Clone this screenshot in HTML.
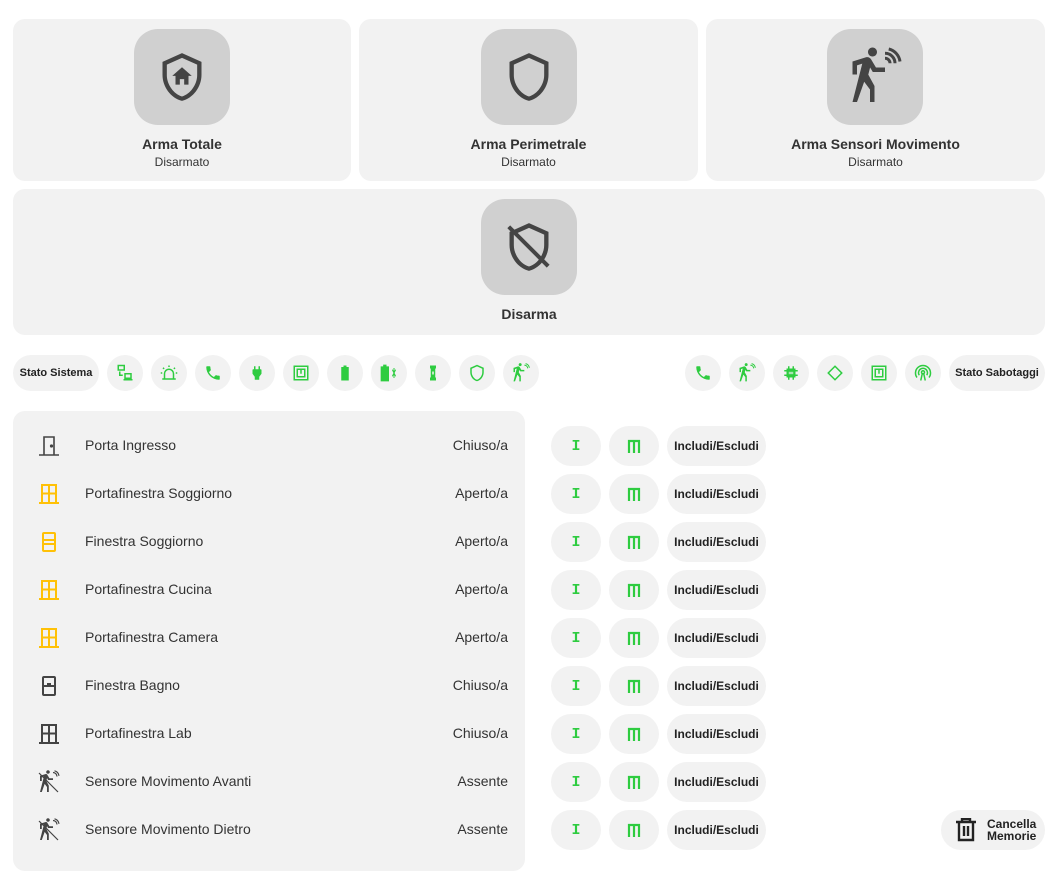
<!DOCTYPE html>
<html><head><meta charset="utf-8"><style>
*{box-sizing:border-box;margin:0;padding:0}
body{width:1062px;height:858px;overflow:hidden;background:#fff;font-family:"Liberation Sans",sans-serif;color:#212121;position:relative}
.card{position:absolute;background:#f2f2f2;border-radius:12px}
.ib{position:absolute;width:96px;height:96px;background:#d0d0d0;border-radius:24px;display:flex;align-items:center;justify-content:center}
.t{position:absolute;width:100%;text-align:center;font-size:14px;font-weight:bold;color:#333}
.s{position:absolute;width:100%;text-align:center;font-size:12px;color:#333}
.chip{position:absolute;top:355px;height:36px;background:#f2f2f2;border-radius:18px;display:flex;align-items:center;justify-content:center}
.c{width:36px}
.lbl{font-size:11px;font-weight:bold;color:#222}
.row{position:absolute;left:13px;width:512px;height:48px}
.row svg{position:absolute;left:24px;top:12px}
.row .n{position:absolute;left:72px;top:15px;font-size:14px;color:#333}
.row .v{position:absolute;right:17px;top:15px;font-size:14px;color:#333}
.b{position:absolute;height:40px;background:#f2f2f2;border-radius:20px;display:flex;align-items:center;justify-content:center;font-size:12px;font-weight:bold;color:#222}
.g{color:#2ecc40;font-size:15px;font-family:"Liberation Mono",monospace}
</style></head><body>
<div class="card" style="left:13px;top:19px;width:338px;height:162px">
 <div class="ib" style="left:121px;top:10px"><svg width="52" height="52" viewBox="0 0 24 24" fill="#444"><path d="M21,11C21,16.55 17.16,21.74 12,23C6.84,21.74 3,16.55 3,11V5L12,1L21,5V11M12,21C15.75,20 19,15.54 19,11.22V6.3L12,3.18L5,6.3V11.22C5,15.54 8.25,20 12,21Z"/><path d="M12,7.5L7.5,11.5H9V15.5H11V13H13V15.5H15V11.5H16.5Z"/></svg></div>
 <div class="t" style="top:117px">Arma Totale</div><div class="s" style="top:136px">Disarmato</div></div>
<div class="card" style="left:359px;top:19px;width:339px;height:162px">
 <div class="ib" style="left:122px;top:10px"><svg width="52" height="52" viewBox="0 0 24 24" fill="#444"><path d="M21,11C21,16.55 17.16,21.74 12,23C6.84,21.74 3,16.55 3,11V5L12,1L21,5V11M12,21C15.75,20 19,15.54 19,11.22V6.3L12,3.18L5,6.3V11.22C5,15.54 8.25,20 12,21Z"/></svg></div>
 <div class="t" style="top:117px">Arma Perimetrale</div><div class="s" style="top:136px">Disarmato</div></div>
<div class="card" style="left:706px;top:19px;width:339px;height:162px">
 <div class="ib" style="left:121px;top:10px"><svg width="60" height="60" viewBox="0 0 24 24" fill="#444"><path d="M11.12,10H16V8.2H12.38L10.38,4.87C10.08,4.37 9.54,4.03 8.92,4.03C8.74,4.03 8.58,4.06 8.42,4.11L3,5.8V11H4.8V7.33L6.91,6.67L3,22H4.8L7.67,13.89L10,17V22H11.8V15.59L9.31,11.05L10.04,8.18M11,3.8C12,3.8 12.8,3 12.8,2C12.8,1 12,0.2 11,0.2C10,0.2 9.2,1 9.2,2C9.2,3 10,3.8 11,3.8Z"/><path d="M16,2.5a4,4 0 0 1 4,4M16,4.5a2,2 0 0 1 2,2M17.5,0.8a6,6 0 0 1 4.5,5" stroke="#444" stroke-width="1.2" fill="none"/></svg></div>
 <div class="t" style="top:117px">Arma Sensori Movimento</div><div class="s" style="top:136px">Disarmato</div></div>
<div class="card" style="left:13px;top:189px;width:1032px;height:146px">
 <div class="ib" style="left:468px;top:10px"><svg width="52" height="52" viewBox="0 0 24 24" fill="#444"><path d="M21,11C21,16.55 17.16,21.74 12,23C6.84,21.74 3,16.55 3,11V5L12,1L21,5V11M12,21C15.75,20 19,15.54 19,11.22V6.3L12,3.18L5,6.3V11.22C5,15.54 8.25,20 12,21Z"/><path d="M2,3.3L3.3,2L21.5,20.2L20.2,21.5Z"/></svg></div>
 <div class="t" style="top:117px">Disarma</div></div>

<div class="chip" style="left:13px;width:86px"><span class="lbl">Stato Sistema</span></div>
<div class="chip c" style="left:107px"><svg width="18" height="18" viewBox="0 0 24 24" fill="none" stroke="#2ecc40" stroke-width="2"><rect x="3" y="2" width="8" height="6"/><path d="M5,10V15H9"/><rect x="12" y="13" width="8" height="6"/><path d="M10,21H22"/></svg></div>
<div class="chip c" style="left:151px"><svg width="18" height="18" viewBox="0 0 24 24" fill="none" stroke="#2ecc40" stroke-width="2"><path d="M6,20V13a6,6 0 0 1 12,0V20M3,20H21M12,2V4M4,5L5.5,6.5M20,5L18.5,6.5M1,12H3M21,12H23"/></svg></div>
<div class="chip c" style="left:195px"><svg width="18" height="18" viewBox="0 0 24 24" fill="#2ecc40"><path d="M6.62,10.79C8.06,13.62 10.38,15.94 13.21,17.38L15.41,15.18C15.69,14.9 16.08,14.82 16.43,14.93C17.55,15.3 18.75,15.5 20,15.5A1,1 0 0,1 21,16.5V20A1,1 0 0,1 20,21A17,17 0 0,1 3,4A1,1 0 0,1 4,3H7.5A1,1 0 0,1 8.5,4C8.5,5.25 8.7,6.45 9.07,7.57C9.18,7.92 9.1,8.31 8.82,8.59L6.62,10.79Z"/></svg></div>
<div class="chip c" style="left:239px"><svg width="18" height="18" viewBox="0 0 24 24" fill="#2ecc40"><path d="M8,3H10V7H14V3H16V7H17A1,1 0 0 1 18,8V13L15,17V21H9V17L6,13V8A1,1 0 0 1 7,7H8Z"/></svg></div>
<div class="chip c" style="left:283px"><svg width="18" height="18" viewBox="0 0 24 24" fill="none" stroke="#2ecc40" stroke-width="2"><rect x="3" y="3" width="18" height="18"/><rect x="7" y="7" width="10" height="10"/><path d="M12,7V13"/></svg></div>
<div class="chip c" style="left:327px"><svg width="18" height="18" viewBox="0 0 24 24" fill="#2ecc40"><path d="M10,2H14V4H17V22H7V4H10Z"/></svg></div>
<div class="chip c" style="left:371px"><svg width="20" height="20" viewBox="0 0 24 24" fill="#2ecc40"><path d="M5,2H9V4H12V22H2V4H5Z"/><path d="M16,8L20,16M16,16L20,8M18,6V18" stroke="#2ecc40" stroke-width="1.2"/></svg></div>
<div class="chip c" style="left:415px"><svg width="18" height="18" viewBox="0 0 24 24" fill="#2ecc40"><path d="M8,2H16V6H15V18H16V22H8V18H9V6H8Z"/><path d="M11,10H13V14H11Z" fill="#f2f2f2"/></svg></div>
<div class="chip c" style="left:459px"><svg width="18" height="18" viewBox="0 0 24 24" fill="#2ecc40"><path d="M21,11C21,16.55 17.16,21.74 12,23C6.84,21.74 3,16.55 3,11V5L12,1L21,5V11M12,21C15.75,20 19,15.54 19,11.22V6.3L12,3.18L5,6.3V11.22C5,15.54 8.25,20 12,21Z"/></svg></div>
<div class="chip c" style="left:503px"><svg width="20" height="20" viewBox="0 0 24 24" fill="#2ecc40"><path d="M11.12,10H16V8.2H12.38L10.38,4.87C10.08,4.37 9.54,4.03 8.92,4.03C8.74,4.03 8.58,4.06 8.42,4.11L3,5.8V11H4.8V7.33L6.91,6.67L3,22H4.8L7.67,13.89L10,17V22H11.8V15.59L9.31,11.05L10.04,8.18M11,3.8C12,3.8 12.8,3 12.8,2C12.8,1 12,0.2 11,0.2C10,0.2 9.2,1 9.2,2C9.2,3 10,3.8 11,3.8Z"/><path d="M16,2.5a4,4 0 0 1 4,4M17.5,0.8a6,6 0 0 1 4.5,5" stroke="#2ecc40" stroke-width="1.2" fill="none"/></svg></div>

<div class="chip c" style="left:685px"><svg width="18" height="18" viewBox="0 0 24 24" fill="#2ecc40"><path d="M6.62,10.79C8.06,13.62 10.38,15.94 13.21,17.38L15.41,15.18C15.69,14.9 16.08,14.82 16.43,14.93C17.55,15.3 18.75,15.5 20,15.5A1,1 0 0,1 21,16.5V20A1,1 0 0,1 20,21A17,17 0 0,1 3,4A1,1 0 0,1 4,3H7.5A1,1 0 0,1 8.5,4C8.5,5.25 8.7,6.45 9.07,7.57C9.18,7.92 9.1,8.31 8.82,8.59L6.62,10.79Z"/></svg></div>
<div class="chip c" style="left:729px"><svg width="20" height="20" viewBox="0 0 24 24" fill="#2ecc40"><path d="M11.12,10H16V8.2H12.38L10.38,4.87C10.08,4.37 9.54,4.03 8.92,4.03C8.74,4.03 8.58,4.06 8.42,4.11L3,5.8V11H4.8V7.33L6.91,6.67L3,22H4.8L7.67,13.89L10,17V22H11.8V15.59L9.31,11.05L10.04,8.18M11,3.8C12,3.8 12.8,3 12.8,2C12.8,1 12,0.2 11,0.2C10,0.2 9.2,1 9.2,2C9.2,3 10,3.8 11,3.8Z"/><path d="M16,2.5a4,4 0 0 1 4,4M17.5,0.8a6,6 0 0 1 4.5,5" stroke="#2ecc40" stroke-width="1.2" fill="none"/></svg></div>
<div class="chip c" style="left:773px"><svg width="18" height="18" viewBox="0 0 24 24" fill="#2ecc40"><path d="M6,6H18V18H6Z"/><path d="M9,3V6M15,3V6M9,18V21M15,18V21M3,9H6M3,15H6M18,9H21M18,15H21" stroke="#2ecc40" stroke-width="2"/><path d="M9,11H15M9,13H15" stroke="#f2f2f2" stroke-width="1"/></svg></div>
<div class="chip c" style="left:817px"><svg width="18" height="18" viewBox="0 0 24 24" fill="none" stroke="#2ecc40" stroke-width="2"><path d="M12,3L21,12L12,21L3,12Z"/></svg></div>
<div class="chip c" style="left:861px"><svg width="18" height="18" viewBox="0 0 24 24" fill="none" stroke="#2ecc40" stroke-width="2"><rect x="3" y="3" width="18" height="18"/><rect x="7" y="7" width="10" height="10"/><path d="M12,7V13"/></svg></div>
<div class="chip c" style="left:905px"><svg width="18" height="18" viewBox="0 0 24 24" fill="none" stroke="#2ecc40" stroke-width="2"><circle cx="12" cy="11" r="2"/><path d="M7,15a6,6 0 1 1 10,0M4,18a10,10 0 1 1 16,0M11,13L9,22M13,13L15,22"/></svg></div>
<div class="chip" style="left:949px;width:96px"><span class="lbl">Stato Sabotaggi</span></div>

<div class="card" style="left:13px;top:411px;width:512px;height:460px"></div>

<div class="row" style="top:422px"><svg width="24" height="24" viewBox="0 0 24 24" fill="none" stroke="#444" stroke-width="1.6"><path d="M2,21H22M7,21V3H17V21"/><circle cx="14.5" cy="12" r="0.8" fill="#444"/></svg><span class="n">Porta Ingresso</span><span class="v">Chiuso/a</span></div>
<div class="row" style="top:470px"><svg width="24" height="24" viewBox="0 0 24 24" fill="none" stroke="#ffc107" stroke-width="2"><path d="M5,20V3H19V20M5,11.5H19M12,3V20M2,21H22"/></svg><span class="n">Portafinestra Soggiorno</span><span class="v">Aperto/a</span></div>
<div class="row" style="top:518px"><svg width="24" height="24" viewBox="0 0 24 24" fill="none" stroke="#ffc107" stroke-width="2"><rect x="6" y="3" width="12" height="18" rx="1"/><path d="M6,10H18M6,14H18"/></svg><span class="n">Finestra Soggiorno</span><span class="v">Aperto/a</span></div>
<div class="row" style="top:566px"><svg width="24" height="24" viewBox="0 0 24 24" fill="none" stroke="#ffc107" stroke-width="2"><path d="M5,20V3H19V20M5,11.5H19M12,3V20M2,21H22"/></svg><span class="n">Portafinestra Cucina</span><span class="v">Aperto/a</span></div>
<div class="row" style="top:614px"><svg width="24" height="24" viewBox="0 0 24 24" fill="none" stroke="#ffc107" stroke-width="2"><path d="M5,20V3H19V20M5,11.5H19M12,3V20M2,21H22"/></svg><span class="n">Portafinestra Camera</span><span class="v">Aperto/a</span></div>
<div class="row" style="top:662px"><svg width="24" height="24" viewBox="0 0 24 24" fill="none" stroke="#444" stroke-width="2"><rect x="6" y="3" width="12" height="18" rx="1"/><path d="M6,12H18M10,10H14"/></svg><span class="n">Finestra Bagno</span><span class="v">Chiuso/a</span></div>
<div class="row" style="top:710px"><svg width="24" height="24" viewBox="0 0 24 24" fill="none" stroke="#444" stroke-width="2"><path d="M5,20V3H19V20M5,11.5H19M12,3V20M2,21H22"/></svg><span class="n">Portafinestra Lab</span><span class="v">Chiuso/a</span></div>
<div class="row" style="top:758px"><svg width="24" height="24" viewBox="0 0 24 24" fill="#444"><path d="M11.12,10H16V8.2H12.38L10.38,4.87C10.08,4.37 9.54,4.03 8.92,4.03C8.74,4.03 8.58,4.06 8.42,4.11L3,5.8V11H4.8V7.33L6.91,6.67L3,22H4.8L7.67,13.89L10,17V22H11.8V15.59L9.31,11.05L10.04,8.18M11,3.8C12,3.8 12.8,3 12.8,2C12.8,1 12,0.2 11,0.2C10,0.2 9.2,1 9.2,2C9.2,3 10,3.8 11,3.8Z"/><path d="M2,3L21,22M16,2.5a4,4 0 0 1 4,4M17.5,0.8a6,6 0 0 1 4.5,5" stroke="#444" stroke-width="1.2" fill="none"/></svg><span class="n">Sensore Movimento Avanti</span><span class="v">Assente</span></div>
<div class="row" style="top:806px"><svg width="24" height="24" viewBox="0 0 24 24" fill="#444"><path d="M11.12,10H16V8.2H12.38L10.38,4.87C10.08,4.37 9.54,4.03 8.92,4.03C8.74,4.03 8.58,4.06 8.42,4.11L3,5.8V11H4.8V7.33L6.91,6.67L3,22H4.8L7.67,13.89L10,17V22H11.8V15.59L9.31,11.05L10.04,8.18M11,3.8C12,3.8 12.8,3 12.8,2C12.8,1 12,0.2 11,0.2C10,0.2 9.2,1 9.2,2C9.2,3 10,3.8 11,3.8Z"/><path d="M2,3L21,22M16,2.5a4,4 0 0 1 4,4M17.5,0.8a6,6 0 0 1 4.5,5" stroke="#444" stroke-width="1.2" fill="none"/></svg><span class="n">Sensore Movimento Dietro</span><span class="v">Assente</span></div>

<div id="btns"></div>
<script>
var h='';for(var i=0;i<9;i++){var t=426+i*48;
h+='<div class="b" style="left:551px;top:'+t+'px;width:50px"><span class="g">I</span></div>';
h+='<div class="b" style="left:609px;top:'+t+'px;width:50px"><svg width="14" height="14" viewBox="0 0 14 14" fill="none" stroke="#2ecc40" stroke-width="2.2"><path d="M2,14V2H12V14M7,2V14"/></svg></div>';
h+='<div class="b" style="left:667px;top:'+t+'px;width:99px">Includi/Escludi</div>';}
document.getElementById('btns').innerHTML=h;
</script>
<div class="b" style="left:941px;top:810px;width:104px;justify-content:flex-start;padding-left:14px">
<svg width="22" height="24" viewBox="0 0 22 24" fill="none" stroke="#222" stroke-width="2.4"><path d="M1,4H21M7,4V1H15V4M4,4V22H18V4M9,8V18M13,8V18"/></svg>
<span style="margin-left:10px;font-size:12px;line-height:12px">Cancella<br>Memorie</span></div>
</body></html>
